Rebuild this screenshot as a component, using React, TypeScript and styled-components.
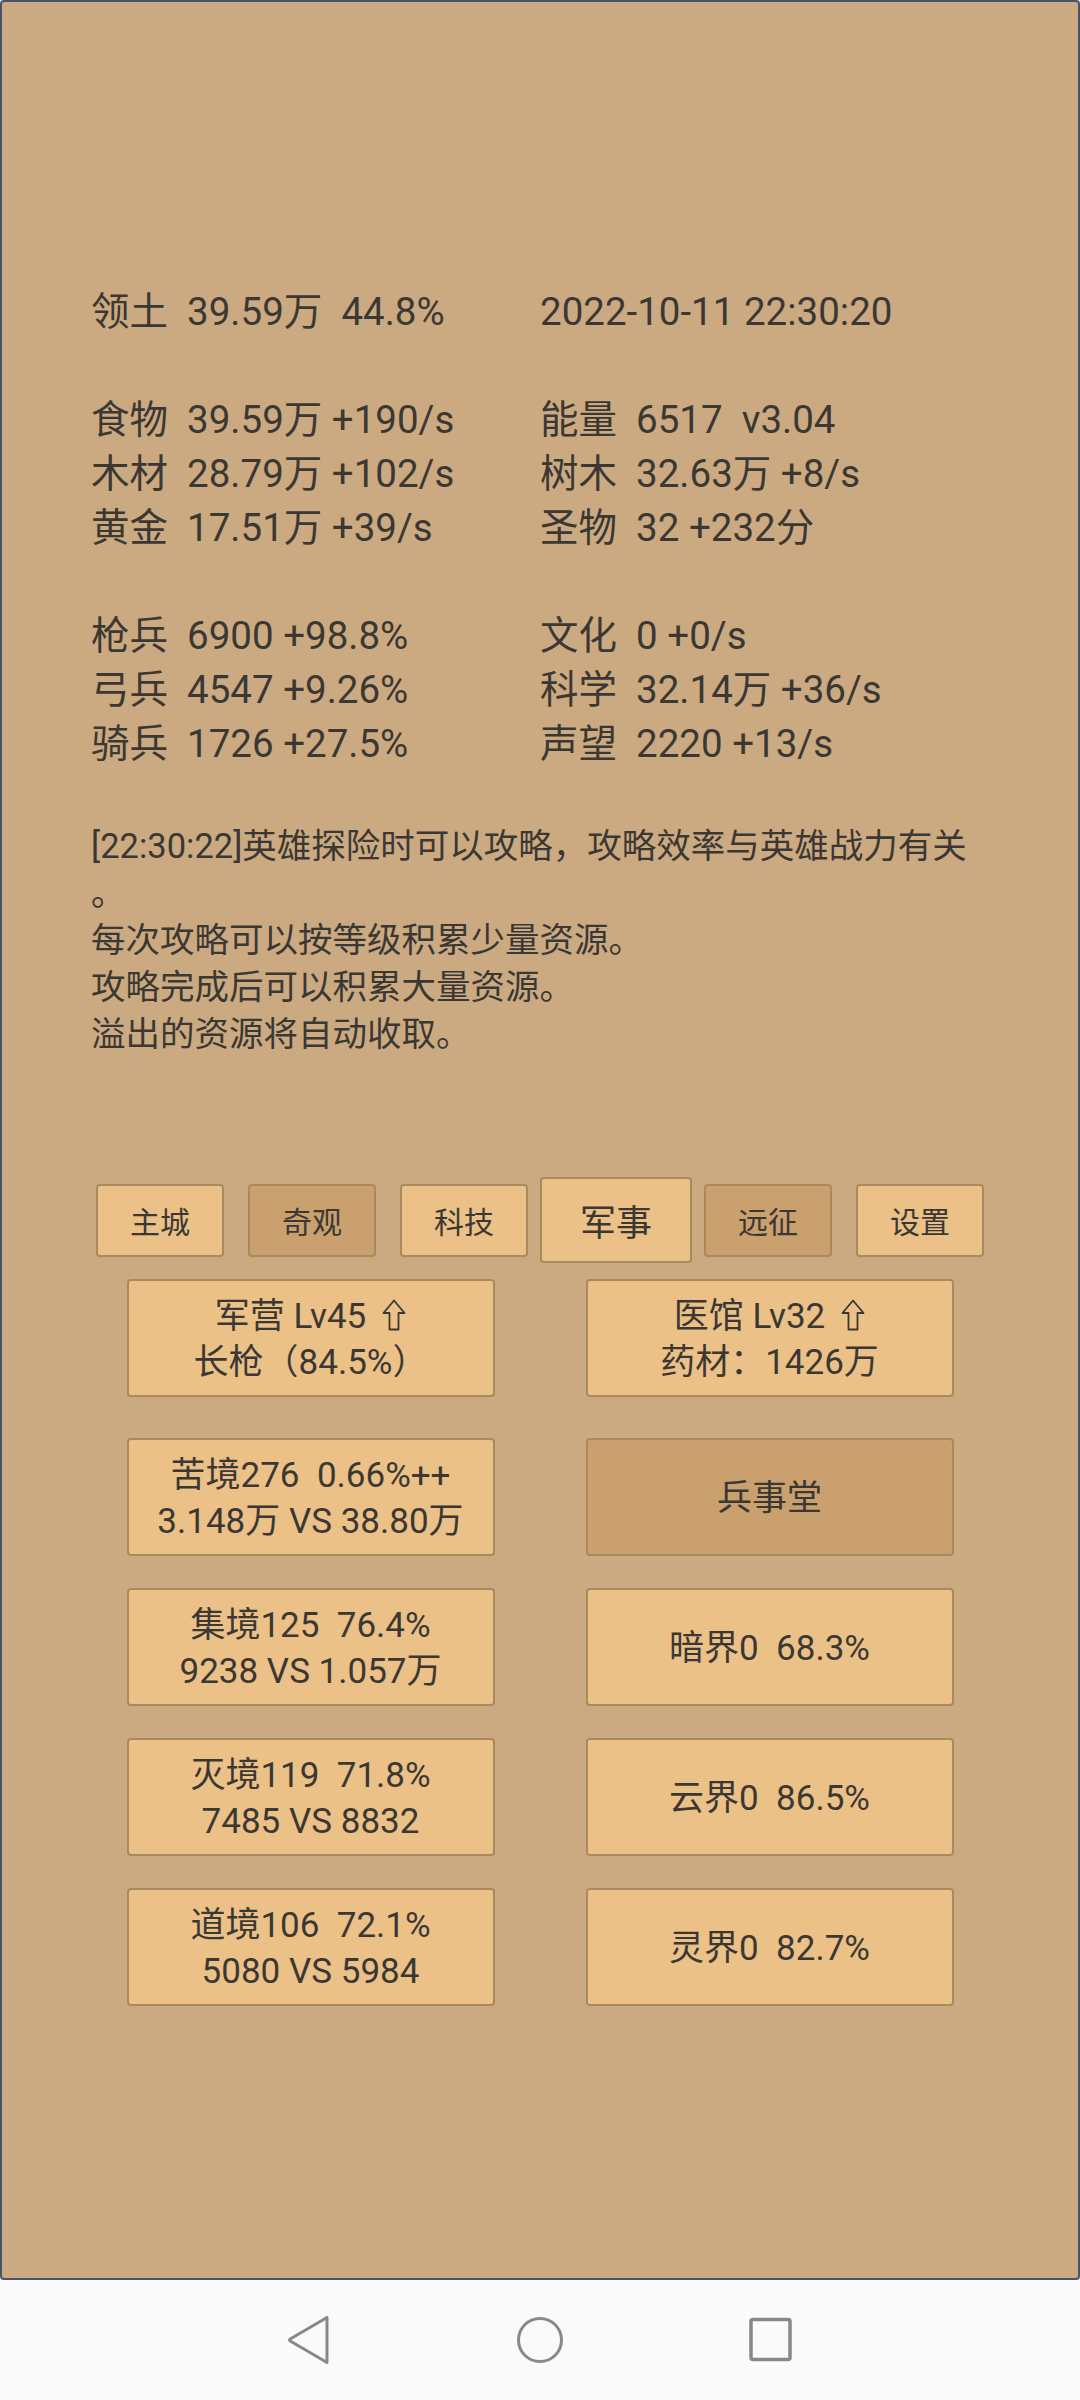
import React from "react";
import styled, { createGlobalStyle } from "styled-components";

const GlobalStyle = createGlobalStyle`
  html, body {
    margin: 0;
    padding: 0;
    background: #fafafa;
  }
  * {
    box-sizing: border-box;
  }
`;

const Screen = styled.div`
  width: 1080px;
  height: 2400px;
  display: flex;
  flex-direction: column;
  font-family: Roboto, "Noto Sans CJK SC", sans-serif;
  color: #3b3834;
`;

const Panel = styled.div`
  height: 2280px;
  background: #cbaa82;
  border: 2px solid #46526b;
  border-radius: 4px;
  padding-top: 283px;
`;

const StatGrid = styled.div`
  display: grid;
  grid-template-columns: 449px 1fr;
  padding-left: 89px;
  font-size: 38.5px;
  line-height: 54px;
  white-space: pre;
`;

const Blank = styled.div`
  grid-column: 1 / -1;
  height: 54px;
`;

const Log = styled.div`
  margin-top: 52px;
  padding-left: 89px;
  font-size: 34.5px;
  line-height: 47px;
  white-space: nowrap;
`;

const TabRow = styled.div`
  margin-top: 119px;
  height: 86px;
  display: grid;
  grid-template-columns: repeat(6, 152px);
  justify-content: center;
  align-items: center;
`;

const Tab = styled.div<{ $dark?: boolean; $active?: boolean }>`
  justify-self: center;
  width: ${(p) => (p.$active ? 152 : 128)}px;
  height: ${(p) => (p.$active ? 86 : 73)}px;
  display: flex;
  align-items: center;
  justify-content: center;
  font-size: ${(p) => (p.$active ? 36 : 30)}px;
  background: ${(p) => (p.$dark ? "#c9a06e" : "#ebc188")};
  border: 2px solid #a98a5f;
  border-radius: 4px;
`;

const Cards = styled.div`
  margin-top: 16px;
  display: grid;
  grid-template-columns: 368px 368px;
  column-gap: 91px;
  row-gap: 32px;
  justify-content: center;

  & > :nth-child(-n + 2) {
    margin-bottom: 9px;
  }
`;

const Card = styled.div<{ $dark?: boolean }>`
  height: 118px;
  display: flex;
  flex-direction: column;
  align-items: center;
  justify-content: center;
  padding-top: 3px;
  font-size: 35px;
  line-height: 46px;
  white-space: pre;
  background: ${(p) => (p.$dark ? "#c9a06e" : "#ebc188")};
  border: 2px solid #a98a5f;
  border-radius: 4px;
`;

const UpArrow = styled.svg`
  width: 24px;
  height: 32px;
  margin-left: 16px;
  vertical-align: -3px;
`;

const NavBar = styled.div`
  flex: 1;
  display: grid;
  grid-template-columns: repeat(3, 231px);
  justify-content: center;
  align-items: center;
  background: #fafafa;
`;

const NavIcon = styled.svg`
  justify-self: center;
  width: 48px;
  height: 48px;
`;

const Up = () => (
  <UpArrow viewBox="0 0 24 32">
    <path
      d="M12 1.5 L22.5 14 H16.5 V30.5 H7.5 V14 H1.5 Z"
      fill="none"
      stroke="#3b3834"
      strokeWidth="1.8"
      strokeLinejoin="round"
    />
  </UpArrow>
);

const stats: [string, string][] = [
  ["领土  39.59万  44.8%", "2022-10-11 22:30:20"],
  ["", ""],
  ["食物  39.59万 +190/s", "能量  6517  v3.04"],
  ["木材  28.79万 +102/s", "树木  32.63万 +8/s"],
  ["黄金  17.51万 +39/s", "圣物  32 +232分"],
  ["", ""],
  ["枪兵  6900 +98.8%", "文化  0 +0/s"],
  ["弓兵  4547 +9.26%", "科学  32.14万 +36/s"],
  ["骑兵  1726 +27.5%", "声望  2220 +13/s"],
];

const logLines = [
  "[22:30:22]英雄探险时可以攻略，攻略效率与英雄战力有关",
  "。",
  "每次攻略可以按等级积累少量资源。",
  "攻略完成后可以积累大量资源。",
  "溢出的资源将自动收取。",
];

const tabs = [
  { label: "主城" },
  { label: "奇观", dark: true },
  { label: "科技" },
  { label: "军事", active: true },
  { label: "远征", dark: true },
  { label: "设置" },
];

const realms: [string, string, string][] = [
  ["苦境276  0.66%++", "3.148万 VS 38.80万", ""],
  ["集境125  76.4%", "9238 VS 1.057万", "暗界0  68.3%"],
  ["灭境119  71.8%", "7485 VS 8832", "云界0  86.5%"],
  ["道境106  72.1%", "5080 VS 5984", "灵界0  82.7%"],
];

export default function App() {
  return (
    <Screen>
      <GlobalStyle />
      <Panel>
        <StatGrid>
          {stats.map(([l, r], i) =>
            l ? (
              <React.Fragment key={i}>
                <div>{l}</div>
                <div>{r}</div>
              </React.Fragment>
            ) : (
              <Blank key={i} />
            )
          )}
        </StatGrid>

        <Log>
          {logLines.map((t, i) => (
            <div key={i}>{t}</div>
          ))}
        </Log>

        <TabRow>
          {tabs.map((t) => (
            <Tab key={t.label} $dark={t.dark} $active={t.active}>
              {t.label}
            </Tab>
          ))}
        </TabRow>

        <Cards>
          <Card>
            <div>
              军营 Lv45
              <Up />
            </div>
            <div>长枪（84.5%）</div>
          </Card>
          <Card>
            <div>
              医馆 Lv32
              <Up />
            </div>
            <div>药材：1426万</div>
          </Card>
          {realms.map(([a, b, c], i) => (
            <React.Fragment key={i}>
              <Card>
                <div>{a}</div>
                <div>{b}</div>
              </Card>
              {c ? (
                <Card>
                  <div>{c}</div>
                </Card>
              ) : (
                <Card $dark>
                  <div>兵事堂</div>
                </Card>
              )}
            </React.Fragment>
          ))}
        </Cards>
      </Panel>

      <NavBar>
        <NavIcon viewBox="0 0 48 48">
          <path
            d="M42 1.5 V46.5 L5.2 25 Q4 24 5.2 23 Z"
            fill="none"
            stroke="#888"
            strokeWidth="3"
            strokeLinejoin="round"
          />
        </NavIcon>
        <NavIcon viewBox="0 0 48 48">
          <circle cx="24" cy="24" r="21.5" fill="none" stroke="#888" strokeWidth="3" />
        </NavIcon>
        <NavIcon viewBox="0 0 48 48">
          <rect x="4" y="3.5" width="39" height="40" rx="2" fill="none" stroke="#888" strokeWidth="3.5" />
        </NavIcon>
      </NavBar>
    </Screen>
  );
}
